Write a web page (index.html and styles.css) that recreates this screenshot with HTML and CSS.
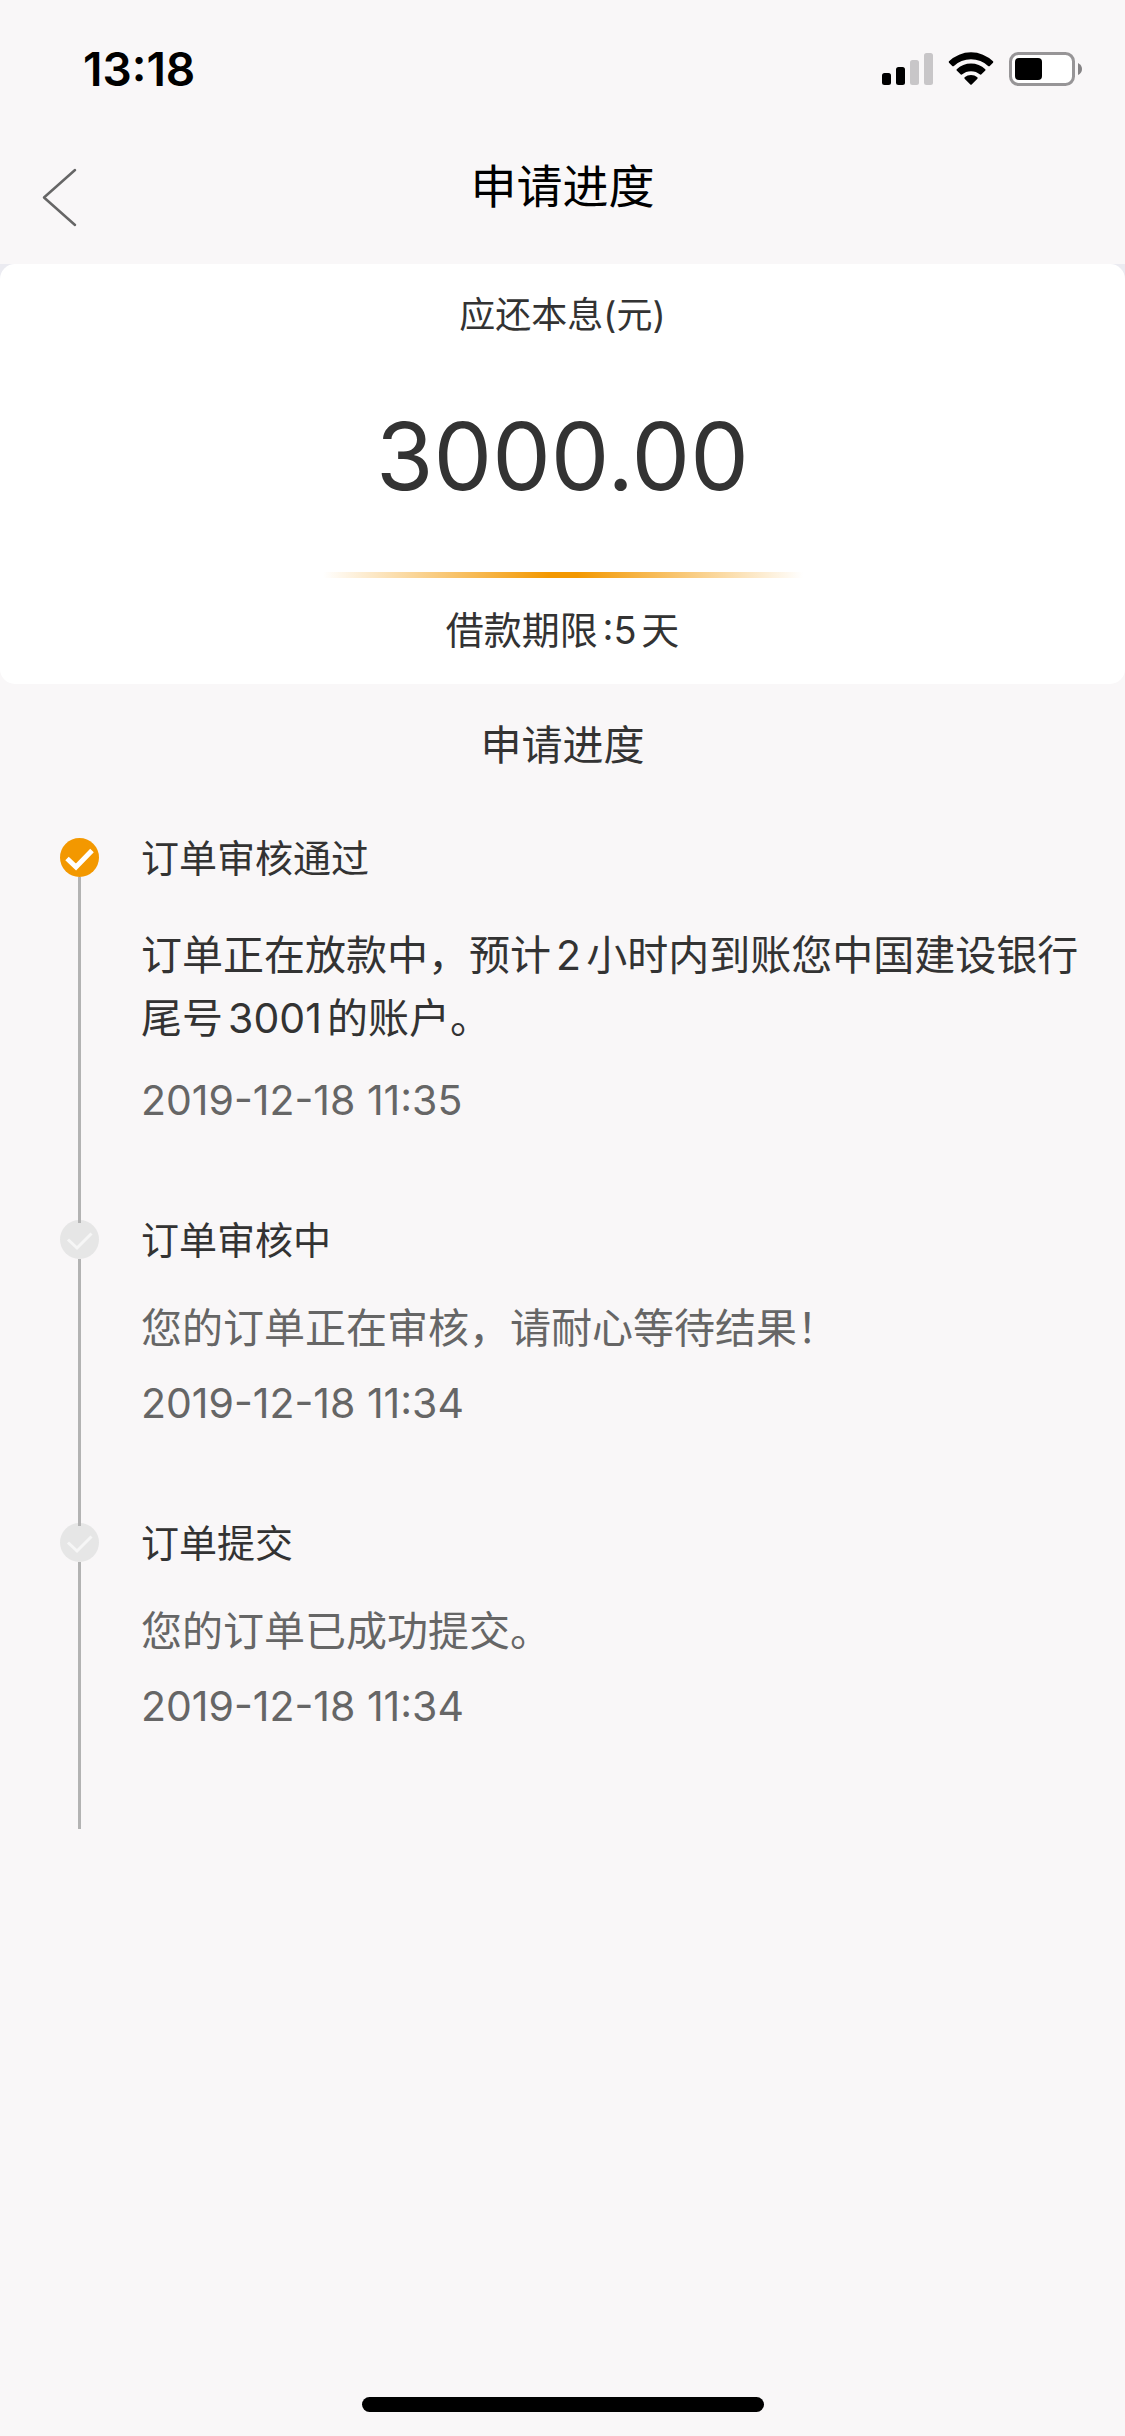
FILE: index.html
```html
<!DOCTYPE html>
<html lang="zh-CN">
<head>
<meta charset="utf-8">
<meta name="viewport" content="width=device-width">
<title>申请进度</title>
<link rel="stylesheet" href="styles.css">
</head>
<body>
<div class="screen">
  <div class="status-bar">
    <time class="clock">13:18</time>
    <div class="status-icons">
      <svg width="51" height="34" viewBox="0 0 51 34" aria-hidden="true">
        <rect x="0" y="21" width="9" height="12" rx="2.5"/>
        <rect x="14" y="15" width="9" height="18" rx="2.5"/>
        <rect x="28" y="8" width="9" height="25" rx="2.5" fill="#c8c6c8"/>
        <rect x="42" y="1" width="9" height="32" rx="2.5" fill="#c8c6c8"/>
      </svg>
      <svg width="46" height="34" viewBox="0 0 46 34" aria-hidden="true">
        <path d="M1 9.300A31.500 31.500 0 0 1 45 9.300Q45.500 10 45 10.700L41.500 14.200Q41 14.500 40.400 14.200A25.500 25.500 0 0 0 5.600 14.200Q5 14.500 4.500 14.200L1 10.700Q.5 10 1 9.300Z"/>
        <path d="M8.700 17.200A21 21 0 0 1 37.300 17.200Q37.800 17.900 37.300 18.600L33.200 22.600Q32.700 22.900 32.100 22.600A14 14 0 0 0 13.900 22.600Q13.300 22.900 12.800 22.600L8.700 18.600Q8.200 17.900 8.700 17.200Z"/>
        <path d="M16.600 25.300A10.500 10.500 0 0 1 29.400 25.300Q29.900 26 29.400 26.700L23.700 32.500Q23 33 22.300 32.500L16.600 26.700Q16.100 26 16.600 25.300Z"/>
      </svg>
      <svg width="73" height="34" viewBox="0 0 73 34" aria-hidden="true">
        <rect x="1.500" y="1.500" width="63" height="31" rx="8" fill="#fff" stroke="#979597" stroke-width="3"/>
        <rect x="6" y="6" width="27" height="22" rx="4"/>
        <path d="M69 11Q73 13 73 17T69 23Z" fill="#858385"/>
      </svg>
    </div>
  </div>

  <header class="nav">
    <a class="back" href="#" aria-label="返回">
      <svg width="36" height="60" viewBox="0 0 36 60" fill="none" stroke="#666" stroke-width="2.500" stroke-linecap="round" stroke-linejoin="round" aria-hidden="true">
        <path d="M33 2 2 29.500 33 57"/>
      </svg>
    </a>
    <h1 class="nav-title">申请进度</h1>
  </header>

  <main class="content">
    <div class="summary-wrap">
      <section class="summary">
        <p class="summary-label">应还本息(元)</p>
        <p class="amount">3000.00</p>
        <div class="divider"></div>
        <p class="term">借款期限:5天</p>
      </section>
    </div>

    <h2 class="section-title">申请进度</h2>

    <ol class="timeline">
      <li class="step step-current">
        <div class="rail">
          <svg class="dot" viewBox="0 0 39 39" aria-hidden="true">
            <circle cx="19.500" cy="19.500" r="19.500"/>
            <path d="M7 20.500 16 29 32 12.500"/>
          </svg>
          <span class="line"></span>
        </div>
        <div class="step-body">
          <h3 class="step-title">订单审核通过</h3>
          <p class="step-text">订单正在放款中，预计2小时内到账您中国建设银行尾号3001的账户。</p>
          <time class="step-time">2019-12-18 11:35</time>
        </div>
      </li>
      <li class="step">
        <div class="rail">
          <svg class="dot" viewBox="0 0 39 39" aria-hidden="true">
            <circle cx="19.500" cy="19.500" r="19.500"/>
            <path d="M8 19.500 17 28 31.500 13.500"/>
          </svg>
          <span class="line"></span>
        </div>
        <div class="step-body">
          <h3 class="step-title">订单审核中</h3>
          <p class="step-text">您的订单正在审核，请耐心等待结果！</p>
          <time class="step-time">2019-12-18 11:34</time>
        </div>
      </li>
      <li class="step">
        <div class="rail">
          <svg class="dot" viewBox="0 0 39 39" aria-hidden="true">
            <circle cx="19.500" cy="19.500" r="19.500"/>
            <path d="M8 19.500 17 28 31.500 13.500"/>
          </svg>
          <span class="line"></span>
        </div>
        <div class="step-body">
          <h3 class="step-title">订单提交</h3>
          <p class="step-text">您的订单已成功提交。</p>
          <time class="step-time">2019-12-18 11:34</time>
        </div>
      </li>
    </ol>
  </main>

  <div class="home-indicator"></div>
</div>
</body>
</html>
```
FILE: styles.css
```css
* {
  box-sizing: border-box;
  margin: 0;
  padding: 0;
}

body {
  background: #f9f7f8;
  color: #333;
  font-family: Inter, "Noto Sans CJK SC", sans-serif;
  font-size: 41px;
  text-autospace: normal;
}

h1, h2, h3 {
  font-weight: 400;
}

.screen {
  display: flex;
  flex-direction: column;
  min-height: 100vh;
}

.status-bar {
  display: flex;
  align-items: center;
  justify-content: space-between;
  height: 132px;
  padding: 6px 43px 0 83px;
  color: #000;
}

.clock {
  font-size: 46px;
  font-weight: 600;
}

.status-icons {
  display: flex;
  gap: 15px;
}

.nav {
  display: grid;
  grid-template-columns: 120px 1fr 120px;
  height: 132px;
  color: #000;
}

.back {
  display: flex;
  align-items: center;
  padding-left: 42px;
}

.nav-title {
  font-size: 46px;
  line-height: 108px;
  text-align: center;
}

.content {
  flex: 1;
}

.summary-wrap {
  background: linear-gradient(#ebebf1 50%, #f9f7f8 50%);
}

.summary {
  display: flex;
  flex-direction: column;
  align-items: center;
  padding: 24px 24px 27px;
  border-radius: 15px;
  background: #fff;
}

.summary-label {
  font-size: 36px;
  line-height: 54px;
}

.amount {
  margin-top: 57px;
  font-size: 93px;
  line-height: 114px;
}

.divider {
  width: 480px;
  max-width: 100%;
  height: 6px;
  margin: 59px 0 25px;
  background: linear-gradient(90deg, transparent, #f39800 47%, #f39800 53%, transparent);
}

.term {
  font-size: 38px;
  line-height: 54px;
}

.section-title {
  margin: 30px 0 62px;
  font-size: 41px;
  line-height: 62px;
  text-align: center;
}

.timeline {
  padding: 0 40px 0 60px;
  list-style: none;
}

.step {
  display: flex;
  gap: 42px;
  color: #666;
}

.rail {
  display: flex;
  flex: none;
  flex-direction: column;
  align-items: center;
  width: 39px;
}

.dot {
  display: block;
  width: 39px;
  height: 39px;
  fill: #e6e6e6;
}

.dot path {
  fill: none;
  stroke: #f6f6f6;
  stroke-width: 3;
}

.step-current .dot {
  fill: #f39800;
}

.step-current .dot path {
  stroke: #fff;
  stroke-width: 5;
}

/* The rail runs slightly over the top of the next dot. */
.line {
  z-index: 1;
  flex: 1;
  width: 3px;
  margin-bottom: -3px;
  background: #b3b3b3;
}

.step-body {
  padding-bottom: 100px;
}

.step-title {
  color: #333;
  font-size: 38px;
  line-height: 40px;
}

.step-text {
  margin: 37px 0 23px;
  font-size: 41px;
  line-height: 63px;
}

.step-current .step-text {
  margin: 46px 0 30px;
  color: #333;
}

.step-time {
  display: block;
  font-size: 41px;
  line-height: 40px;
}

.home-indicator {
  width: 402px;
  height: 15px;
  margin: 24px auto;
  border-radius: 8px;
  background: #000;
}
```
